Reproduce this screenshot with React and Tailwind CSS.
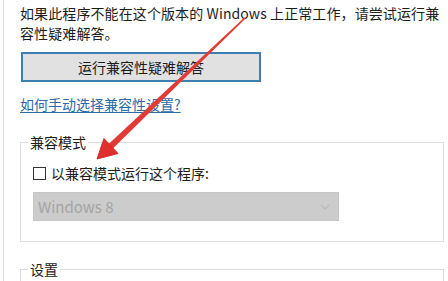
import React from "react";

export default function App() {
  const font = { fontFamily: '"Noto Sans CJK SC", "Noto Sans", sans-serif' };
  return (
    <div className="relative w-[448px] h-[281px] overflow-hidden bg-white text-[#1c1c1c]" style={font}>
      <div className="pl-[3px] h-full">
        <div className="h-full border-l border-[#e2e2e2] pl-4 pr-[4px] pt-[3px]">
          <p className="text-[14px] leading-[20px] tracking-[0.1px]">
            如果此程序不能在这个版本的 Windows 上正常工作，请尝试运行兼容性疑难解答。
          </p>
          <button className="mt-[9px] ml-[1px] w-[240px] h-[30px] border-2 border-[#3d7fae] bg-[#e1e1e1] text-[14px] leading-[20px] flex items-center justify-center">
            运行兼容性疑难解答
          </button>
          <div className="mt-[12px] text-[14px] leading-[20px]">
            <a className="text-[#2a6aa8] underline underline-offset-2">如何手动选择兼容性设置?</a>
          </div>

          <fieldset className="mt-[20px] border border-[#dcdcdc] p-0 m-0">
            <legend className="ml-[7px] px-[2px] text-[14px] leading-[16px]">兼容模式</legend>
            <div className="pl-[12px] pb-[20px]">
              <div className="mt-[13px] h-[20px] flex items-center gap-[5px]">
                <div className="w-[13px] h-[13px] border border-[#333] bg-white"></div>
                <span className="text-[14px] leading-[20px]">以兼容模式运行这个程序:</span>
              </div>
              <div className="mt-[9px] w-[306px] h-[29px] bg-[#cccccc] border border-[#c6c6c6] flex items-center justify-between pl-[4px] pr-[8px]">
                <span className="text-[15px] leading-[20px] text-[#a4a4a4]">Windows 8</span>
                <svg width="10" height="6" viewBox="0 0 10 6">
                  <path d="M1 1 L5 5 L9 1" fill="none" stroke="#b9b9b9" strokeWidth="1.2" />
                </svg>
              </div>
            </div>
          </fieldset>

          <fieldset className="mt-[19px] border border-[#dcdcdc] p-0 m-0 h-[40px]">
            <legend className="ml-[7px] px-[2px] text-[14px] leading-[16px]">设置</legend>
          </fieldset>
        </div>
      </div>

      <svg className="absolute top-0 left-0 pointer-events-none" width="448" height="281" viewBox="0 0 448 281">
        <polygon points="245.6,18.4 244.4,17.6 108.9,143.8 113.1,148.2" fill="#e23b36" />
        <polygon points="97,159 118,153.5 104,138.5" fill="#e02f2c" stroke="#d02a28" strokeWidth="1" strokeLinejoin="round" />
      </svg>
    </div>
  );
}
